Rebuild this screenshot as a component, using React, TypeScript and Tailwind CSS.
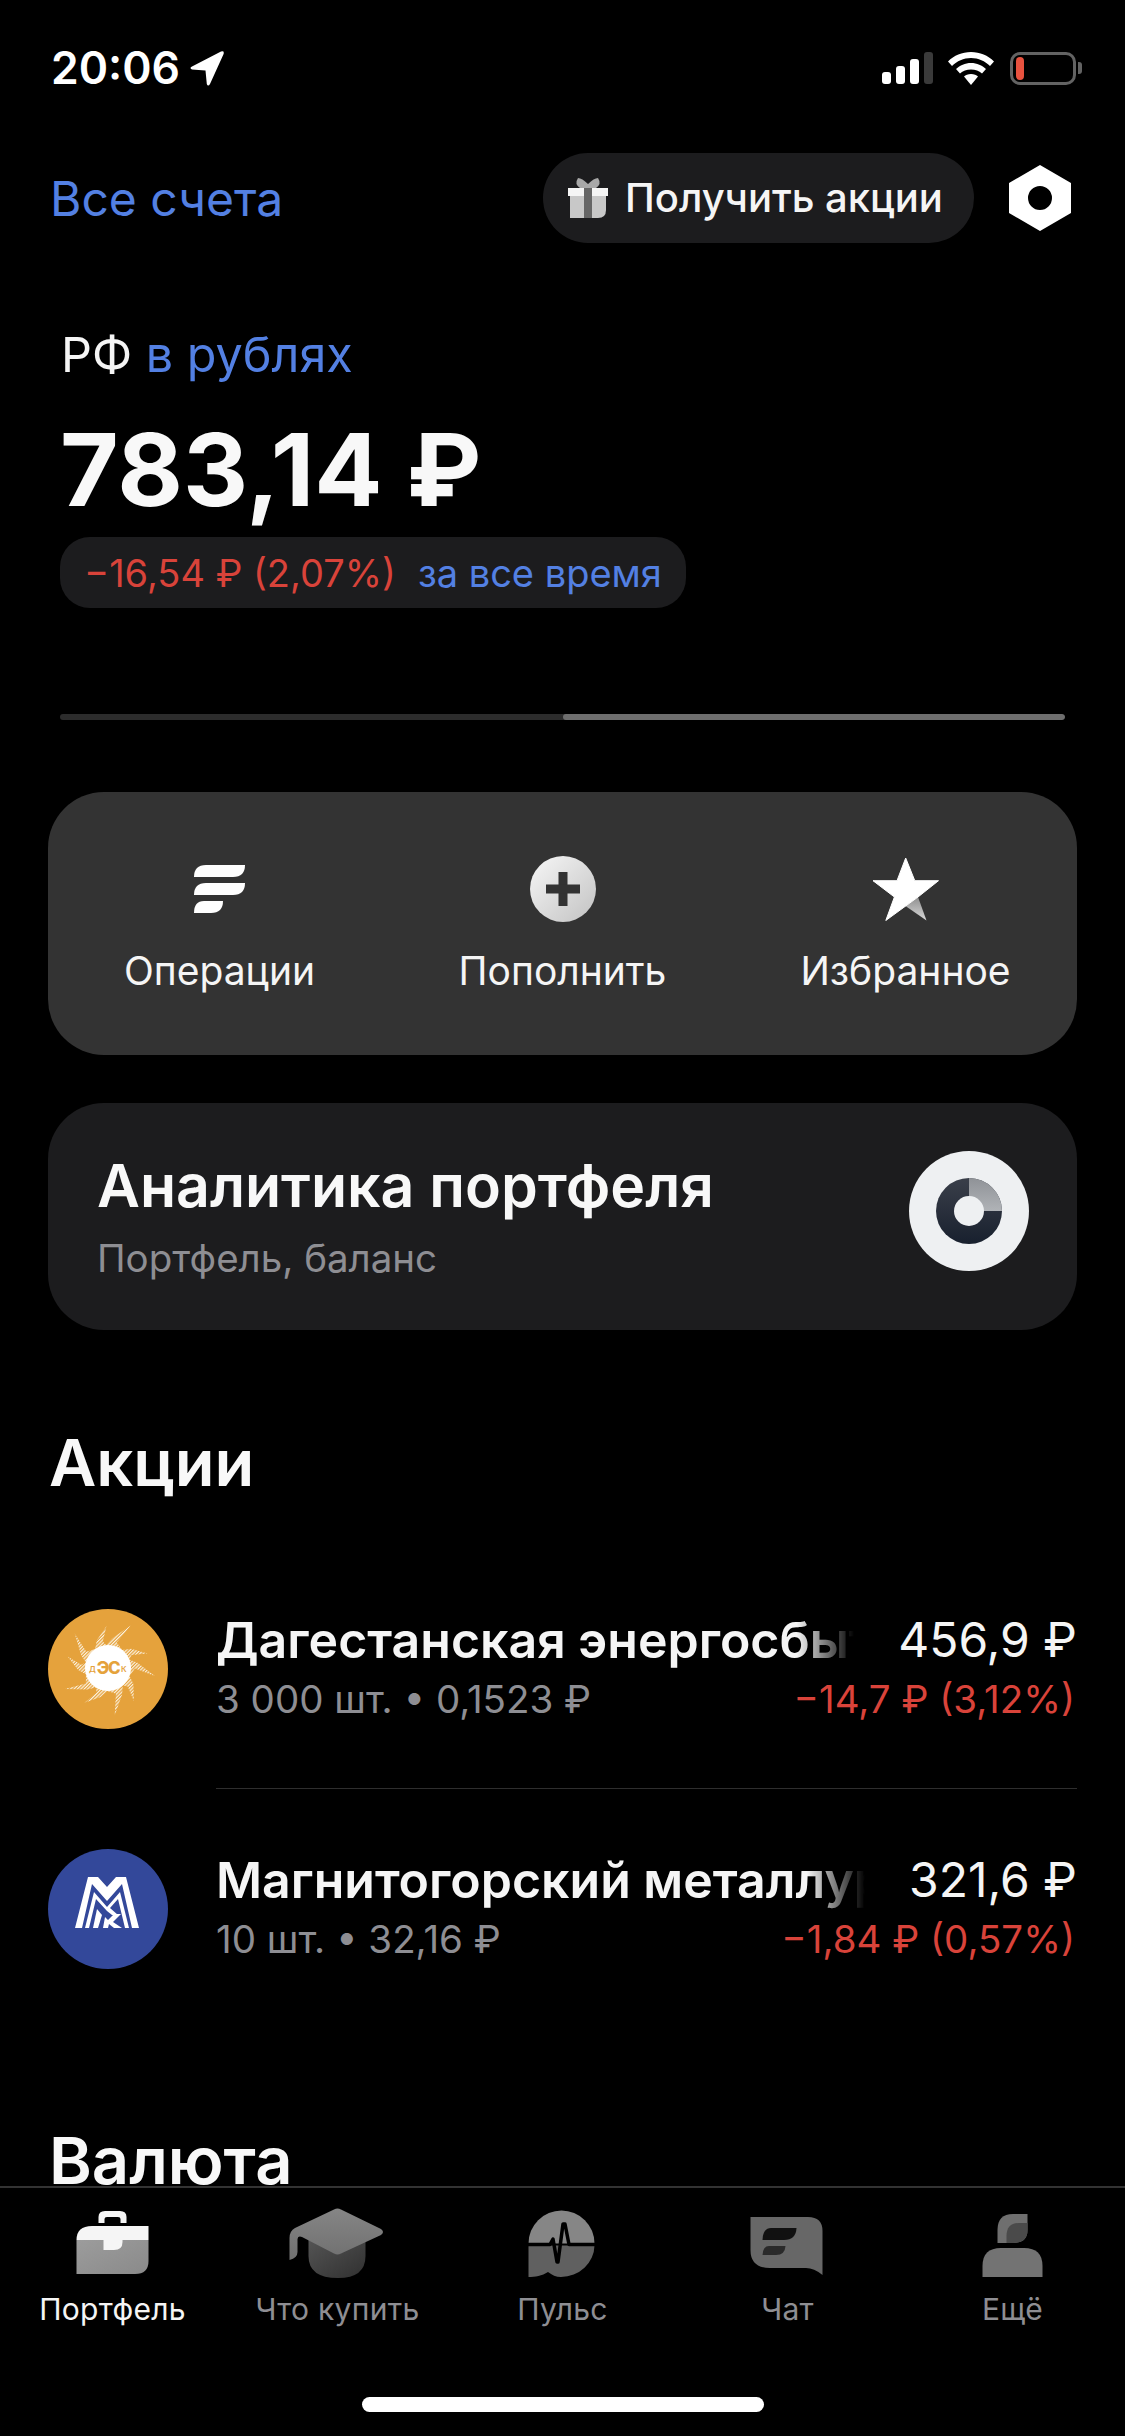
import React from "react";

function Spikes() {
  const pts: string[] = [];
  const n = 10;
  for (let i = 0; i < n; i++) {
    const a = (i * 360) / n + (i % 2 ? 6 : 0);
    const p = (r: number, d: number) => {
      const t = ((a + d) * Math.PI) / 180;
      return `${(60 + r * Math.cos(t)).toFixed(1)},${(59 + r * Math.sin(t)).toFixed(1)}`;
    };
    pts.push(p(23, -22), p(30, -10), p(i % 2 ? 42 : 48, 10), p(27, 1));
  }
  return <polygon points={pts.join(" ")} fill="url(#hatch)" />;
}

function SunLogo() {
  return (
    <svg viewBox="0 0 120 120" className="w-[120px] h-[120px] shrink-0">
      <defs>
        <pattern id="hatch" width="2.4" height="2.4" patternUnits="userSpaceOnUse" patternTransform="rotate(-45)">
          <rect width="2.4" height="2.4" fill="#e5a23c" />
          <rect width="2.4" height="1.2" fill="#fbf1de" />
        </pattern>
      </defs>
      <circle cx="60" cy="60" r="60" fill="#e5a23c" />
      <Spikes />
      <circle cx="60" cy="59" r="23" fill="#ffffff" />
      <text x="41" y="63" fontSize="8" fill="#e5a23c" fontFamily="Inter, sans-serif" fontWeight="600">Д</text>
      <text x="73" y="63" fontSize="8" fill="#e5a23c" fontFamily="Inter, sans-serif" fontWeight="600">К</text>
      <text x="60" y="65" fontSize="17" letterSpacing="-1.5" fill="#e5a23c" textAnchor="middle" fontFamily="Inter, sans-serif" fontWeight="800">ЭС</text>
    </svg>
  );
}

function MmkLogo() {
  return (
    <svg viewBox="0 0 120 120" className="w-[120px] h-[120px] shrink-0">
      <circle cx="60" cy="60" r="60" fill="#33489a" />
      <path d="M27 79 L40 28 H50 L59 38 L68 28 H78 L91 79 H84 L74 35 L59 52 L44 35 L34 79Z" fill="#ffffff" />
      <path d="M37 79 L46 43 L59 58 L72 43 L81 79 H77 L70 50 L62 59 L70 66 L64 66 L59 62 L48 50 L41 79Z" fill="#ffffff" />
      <path d="M45 79 L49 60 L54 66 L50 79Z" fill="#ffffff" />
      <path d="M55 79 L57 68 L60 71 L66 65 H73 L65 73 L74 79 H66 L61 75 L60 79Z" fill="#ffffff" />
    </svg>
  );
}

function BriefcaseIcon() {
  return (
    <svg viewBox="0 0 100 76" className="w-[100px] h-[76px]">
      <defs>
        <linearGradient id="caseG" x1="0" y1="0" x2="1" y2="1">
          <stop offset="0" stopColor="#9c9c9c" />
          <stop offset="1" stopColor="#8a8a8a" />
        </linearGradient>
      </defs>
      <path d="M35.5 17 V11 Q35.5 5 42 5 H57 Q63.5 5 63.5 11 V17 H57.5 V13 Q57.5 11 55 11 H44 Q41.5 11 41.5 13 V17Z" fill="#f5f5f5" />
      <path d="M13.5 34 V68 H72 Q85.5 68 85.5 55 V34Z" fill="url(#caseG)" />
      <path d="M13.5 34 Q13.5 20 29 20 H85.5 V34Z" fill="#f5f5f5" />
      <path d="M40.5 33 H59.5 V36 Q59.5 44 51 44 H40.5Z" fill="#f5f5f5" />
    </svg>
  );
}

function HatIcon() {
  return (
    <svg viewBox="0 0 100 76" className="w-[100px] h-[76px]">
      <defs>
        <linearGradient id="hatLow" x1="0" y1="0" x2="1" y2="1">
          <stop offset="0" stopColor="#555555" />
          <stop offset="1" stopColor="#303030" />
        </linearGradient>
        <linearGradient id="hatTop" x1="0" y1="0" x2="0" y2="1">
          <stop offset="0" stopColor="#858585" />
          <stop offset="1" stopColor="#707070" />
        </linearGradient>
      </defs>
      <path d="M20.5 32 L49.5 48 L77.5 32 V50 Q77.5 72 50 72 Q20.5 72 20.5 50Z" fill="url(#hatLow)" />
      <path d="M46 3.5 Q49.5 1.5 53 3.5 L93 23 Q97 26 93 29 L53 47.5 Q49.5 49.5 46 47.5 L14 31 Q10 29.5 9.5 33 V46 Q9.5 52 1.5 54 V32 Q1.5 25 7 22Z" fill="url(#hatTop)" />
    </svg>
  );
}

function PulseIcon() {
  return (
    <svg viewBox="0 0 100 76" className="w-[100px] h-[76px]">
      <path d="M15.5 37.5 A33 33 0 0 1 81.5 37.5Z" fill="#868686" />
      <path d="M15.5 39.5 H81.5 A33 32 0 0 1 48 71 C43 71 39 69 35 66 C29 70 22 71 15.5 71Z" fill="#606060" />
      <path d="M12 38.5 H37 L40 33 L44 56 H45 L50 18 H52 L56 38.5 H85" fill="none" stroke="#000000" strokeWidth="3.5" strokeLinejoin="round" />
    </svg>
  );
}

function ChatIcon() {
  return (
    <svg viewBox="0 0 100 76" className="w-[100px] h-[76px]">
      <path d="M12.5 11 H70 Q84.5 11 84.5 25 V69 Q76 62 68 62 H32 Q12.5 62 12.5 44Z" fill="#676767" />
      <path d="M33 22 H58.5 Q58 34 46 34 H24.5 Q25 22 33 22Z" fill="#111111" />
      <path d="M31 40 H47.5 Q47 49 38 49 H24.5 Q25 40 31 40Z" fill="#2a2a2a" />
    </svg>
  );
}

function MoreIcon() {
  return (
    <svg viewBox="0 0 100 76" className="w-[100px] h-[76px]">
      <path d="M64.5 8 V24 Q64.5 37 50 37 H34.5 V24 Q34.5 8 50 8Z" fill="#6f6f6f" />
      <path d="M64.5 17 V24 Q64.5 37 50 37 H43.5 V30 Q43.5 17 56 17Z" fill="#4a4a4a" />
      <path d="M19.5 71 V60 Q19.5 42 38 42 H61 Q79.5 42 79.5 60 V71Z" fill="#737373" />
    </svg>
  );
}

function Tab({ label, active, children }: { label: string; active?: boolean; children: React.ReactNode }) {
  return (
    <div className="flex flex-col items-center">
      {children}
      <span className={`mt-[7px] text-[30px] leading-[40px] tracking-[0.3px] ${active ? "text-[#f5f5f5]" : "text-[#8e8e93]"}`}>{label}</span>
    </div>
  );
}

function Stock({ logo, title, sub, value, delta }: { logo: React.ReactNode; title: string; sub: string; value: string; delta: string }) {
  return (
    <div className="flex h-[120px] items-start">
      {logo}
      <div className="ml-[48px] flex min-w-0 flex-1 flex-col pt-[1px]">
        <div className="flex h-[60px] items-center gap-[44px]">
          <div className="min-w-0 flex-1 overflow-hidden whitespace-nowrap text-[50px] font-semibold leading-[60px] text-[#f5f5f5] [mask-image:linear-gradient(to_right,black_91%,transparent)]">
            {title}
          </div>
          <div className="shrink-0 text-[48px] leading-[60px] text-[#f5f5f5]">{value}</div>
        </div>
        <div className="mt-[4px] flex h-[50px] items-center justify-between">
          <span className="text-[38.5px] leading-[50px] text-[#8e8e93]">{sub}</span>
          <span className="pr-[2px] text-[38.5px] leading-[50px] text-[#d9433a]">{delta}</span>
        </div>
      </div>
    </div>
  );
}

export default function App() {
  return (
    <div className="flex h-[2436px] w-[1125px] flex-col overflow-hidden bg-black font-['Inter','Noto_Sans',sans-serif] text-[#f5f5f5]">
      <div className="min-h-0 flex-1 overflow-hidden">
        {/* Status bar */}
        <div className="flex h-[136px] items-center justify-between pl-[51px] pr-[43px]">
          <div className="flex items-center gap-[10px]">
            <span className="text-[44.5px] font-semibold leading-[50px] text-white">20:06</span>
            <svg viewBox="0 0 34 35" className="h-[35px] w-[34px]">
              <path d="M31 .6 Q34.5 -.6 33.6 3 L20 33 Q18 36 16.8 33 L15.5 19.5 L2 18.6 Q-1 17 2 15.5Z" fill="#ffffff" />
            </svg>
          </div>
          <div className="flex items-center">
            <div className="flex items-end gap-[5px]">
              <div className="h-[12px] w-[9px] rounded-[3px] bg-white" />
              <div className="h-[18px] w-[9px] rounded-[3px] bg-white" />
              <div className="h-[25px] w-[9px] rounded-[3px] bg-white" />
              <div className="h-[32px] w-[9px] rounded-[3px] bg-[#3a3a3a]" />
            </div>
            <svg viewBox="0 0 46 33" className="ml-[15px] h-[33px] w-[46px]">
              <path d="M23 0 C32 0 40 3.5 46 9.5 L42 14 C37 9 30.500 6 23 6 C15.500 6 9 9 4 14 L0 9.500 C6 3.500 14 0 23 0Z" fill="#fff" />
              <path d="M23 11 C29 11 34 13.500 38 17 L34 21.500 C31 19 27.500 17.500 23 17.500 C18.500 17.500 15 19 12 21.500 L8 17 C12 13.500 17 11 23 11Z" fill="#fff" />
              <path d="M23 22 C26 22 28.500 23 30 24.500 L23 33 L16 24.500 C17.500 23 20 22 23 22Z" fill="#fff" />
            </svg>
            <div className="ml-[16px] flex items-center">
              <div className="flex h-[33px] w-[66px] items-center rounded-[10px] border-[3px] border-[#636363] pl-[3px]">
                <div className="h-[23px] w-[8px] rounded-[4px] bg-[#e8523f]" />
              </div>
              <div className="ml-[2px] h-[12px] w-[4px] rounded-r-[3px] bg-[#636363]" />
            </div>
          </div>
        </div>

        {/* Header */}
        <div className="mt-[17px] flex h-[90px] items-center justify-between pl-[50px] pr-[54px]">
          <span className="pt-[2px] text-[48px] leading-[60px] text-[#5380e3]">Все счета</span>
          <div className="flex items-center gap-[35px]">
            <div className="flex h-[90px] w-[431px] items-center rounded-full bg-[#1c1c1e] pl-[25px]">
              <svg viewBox="0 0 40 40" className="h-[40px] w-[40px]">
                <path d="M10 0 Q14 0 20 6 Q26 0 30 0 Q34 6 28 10 H12 Q6 6 10 0Z" fill="#a8a8a8" />
                <rect x="0" y="10" width="40" height="8" fill="#f5f5f5" />
                <path d="M2 18 H38 V32 Q38 40 30 40 H2Z" fill="#c8c8c8" />
                <rect x="16" y="10" width="8" height="30" fill="#666666" />
              </svg>
              <span className="ml-[17px] text-[40px] font-medium leading-[50px] text-[#f5f5f5]">Получить акции</span>
            </div>
            <svg viewBox="0 0 62 66" className="h-[66px] w-[62px]">
              <path fillRule="evenodd" d="M31 0 L62 18 V48 L31 66 L0 48 V18Z M31 21 A12 12 0 1 0 31 45 A12 12 0 1 0 31 21Z" fill="#ffffff" />
            </svg>
          </div>
        </div>

        {/* Balance */}
        <div className="mt-[82px] pl-[61px] text-[48.5px] leading-[60px]">
          <span className="text-[#f5f5f5]">РФ</span> <span className="text-[#5380e3]">в рублях</span>
        </div>
        <div className="mt-[34px] pl-[60px] text-[101px] font-bold leading-[100px] text-[#f8f8f8]">783,14 ₽</div>
        <div className="ml-[60px] mt-[18px] flex h-[71px] w-[626px] items-center gap-[22px] rounded-[30px] bg-[#1c1c1e] pl-[24px] text-[38px] leading-[50px]">
          <span className="text-[#d9433a]">−16,54 ₽ (2,07%)</span>
          <span className="text-[#5380e3]">за все время</span>
        </div>

        {/* Scroll indicator */}
        <div className="mx-[60px] mt-[106px] flex h-[6px] overflow-hidden rounded-full bg-[#2c2c2c]">
          <div className="ml-[503px] h-full flex-1 rounded-full bg-[#6e6e6e]" />
        </div>

        {/* Actions */}
        <div className="mx-[48px] mt-[72px] grid h-[263px] grid-cols-3 rounded-[56px] bg-[#333333] pt-[62px]">
          <div className="flex flex-col items-center">
            <div className="flex h-[70px] items-center">
              <svg viewBox="0 0 51 48" className="h-[48px] w-[51px]">
                <path d="M12 0 H51 Q51 12 39 12 H0 Q0 0 12 0Z" fill="#ffffff" />
                <path d="M12 18 H51 Q51 30 39 30 H0 Q0 18 12 18Z" fill="#ffffff" />
                <path d="M10 36 H29 Q29 48 17 48 H0 Q0 36 10 36Z" fill="#ffffff" />
              </svg>
            </div>
            <span className="mt-[22px] text-[39px] leading-[50px] text-[#f5f5f5]">Операции</span>
          </div>
          <div className="flex flex-col items-center">
            <div className="flex h-[70px] items-center">
              <svg viewBox="0 0 66 66" className="h-[66px] w-[66px]">
                <defs>
                  <linearGradient id="plusG" x1="0" y1="0" x2="1" y2="1">
                    <stop offset="0" stopColor="#f7f7f7" />
                    <stop offset="1" stopColor="#c2c2c2" />
                  </linearGradient>
                </defs>
                <circle cx="33" cy="33" r="33" fill="url(#plusG)" />
                <rect x="28.500" y="16" width="9" height="34" fill="#333333" />
                <rect x="16" y="28.500" width="34" height="9" fill="#333333" />
              </svg>
            </div>
            <span className="mt-[22px] text-[39px] leading-[50px] text-[#f5f5f5]">Пополнить</span>
          </div>
          <div className="flex flex-col items-center">
            <div className="flex h-[70px] items-center">
              <svg viewBox="0 0 66 63" className="h-[63px] w-[66px]">
                <defs>
                  <linearGradient id="starG" x1="0" y1="0" x2="0" y2="1">
                    <stop offset="0" stopColor="#8f8f8f" />
                    <stop offset="1" stopColor="#d8d8d8" />
                  </linearGradient>
                </defs>
                <path d="M45 39 L53.500 62.500 L32.500 48Z" fill="url(#starG)" />
                <path d="M32.700 0 L41.800 22.700 H65.500 L45 39 L12.800 62.500 L21.400 39 L0 22.700 H24Z" fill="#ffffff" strokeLinejoin="round" stroke="#ffffff" strokeWidth="1" />
              </svg>
            </div>
            <span className="mt-[22px] text-[39px] leading-[50px] text-[#f5f5f5]">Избранное</span>
          </div>
        </div>

        {/* Analytics */}
        <div className="mx-[48px] mt-[48px] flex h-[227px] items-center justify-between rounded-[56px] bg-[#1c1c1e] pl-[49px] pr-[48px]">
          <div className="flex flex-col">
            <span className="text-[59px] font-semibold leading-[70px] text-[#f8f8f8]">Аналитика портфеля</span>
            <span className="mt-[12px] text-[38.5px] leading-[50px] text-[#8e8e93]">Портфель, баланс</span>
          </div>
          <svg viewBox="0 0 120 120" className="-mt-[11px] h-[120px] w-[120px]">
            <defs>
              <linearGradient id="donutG" x1="0" y1="0" x2="0" y2="1">
                <stop offset="0" stopColor="#3a3f4a" />
                <stop offset="1" stopColor="#18202e" />
              </linearGradient>
              <linearGradient id="donutQ" x1="0" y1="0" x2="0" y2="1">
                <stop offset="0" stopColor="#8f9297" />
                <stop offset="1" stopColor="#b0b3b7" />
              </linearGradient>
            </defs>
            <circle cx="60" cy="60" r="60" fill="#eef0f2" />
            <circle cx="60" cy="60" r="33" fill="url(#donutG)" />
            <path d="M60 27 A33 33 0 0 1 93 60 H60Z" fill="url(#donutQ)" />
            <circle cx="60" cy="60" r="15" fill="#eef0f2" />
          </svg>
        </div>

        {/* Stocks */}
        <div className="mt-[103px] pl-[49px] text-[65px] font-semibold leading-[60px] text-[#f8f8f8]">Акции</div>
        <div className="mx-[48px] mt-[116px]">
          <Stock logo={<SunLogo />} title="Дагестанская энергосбытовая компания" sub="3 000 шт. • 0,1523 ₽" value="456,9 ₽" delta="−14,7 ₽ (3,12%)" />
          <div className="ml-[168px] mt-[59px] h-px bg-[#2e2e2e]" />
          <div className="mt-[60px]">
            <Stock logo={<MmkLogo />} title="Магнитогорский металлургический комбинат" sub="10 шт. • 32,16 ₽" value="321,6 ₽" delta="−1,84 ₽ (0,57%)" />
          </div>
        </div>
        <div className="mt-[162px] pl-[49px] text-[65px] font-semibold leading-[60px] text-[#f8f8f8]">Валюта</div>
      </div>

      {/* Tab bar */}
      <div className="h-[250px] shrink-0 border-t-2 border-[#333333] bg-black pt-[18px]">
        <div className="grid grid-cols-5">
          <Tab label="Портфель" active><BriefcaseIcon /></Tab>
          <Tab label="Что купить"><HatIcon /></Tab>
          <Tab label="Пульс"><PulseIcon /></Tab>
          <Tab label="Чат"><ChatIcon /></Tab>
          <Tab label="Ещё"><MoreIcon /></Tab>
        </div>
        <div className="mx-auto mt-[68px] h-[15px] w-[402px] rounded-full bg-white" />
      </div>
    </div>
  );
}
